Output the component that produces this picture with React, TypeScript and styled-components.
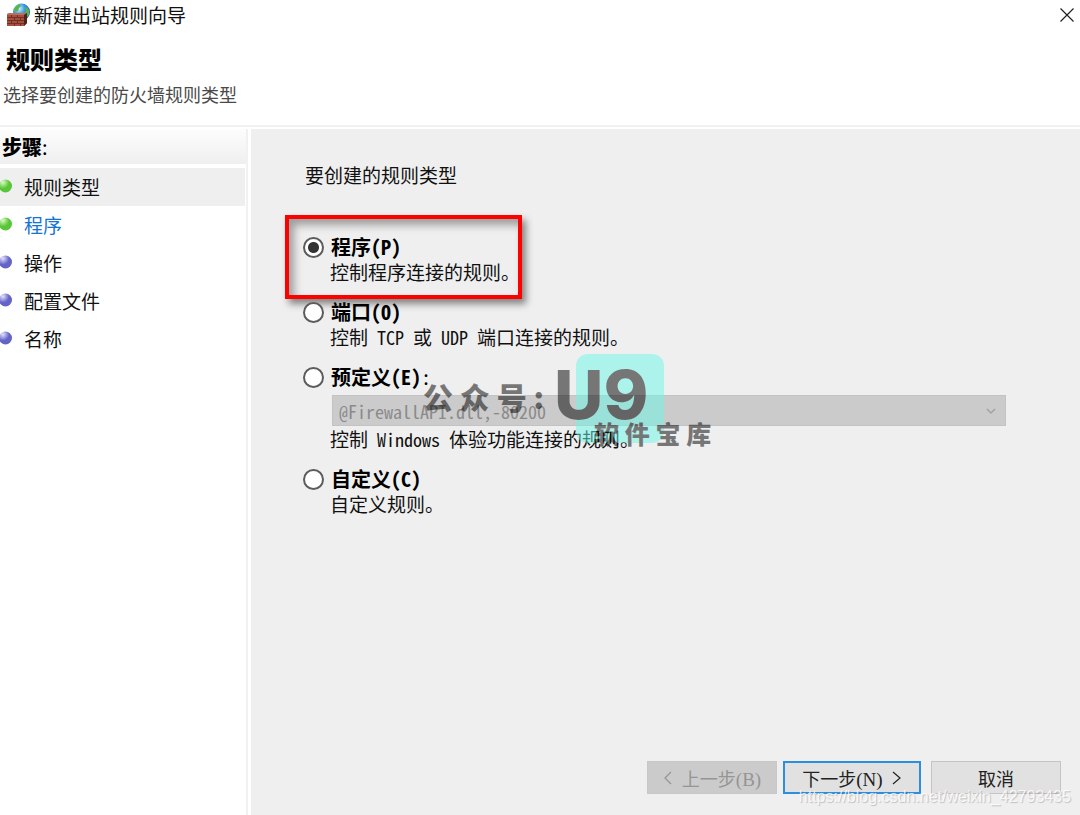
import React, { useState } from "react";
import styled, { createGlobalStyle, css } from "styled-components";

const sans = `"Noto Sans CJK SC", sans-serif`;

const GlobalStyle = createGlobalStyle`
  *, *::before, *::after { box-sizing: border-box; }
  body { margin: 0; background: #fff; font-family: ${sans}; color: #111; }
`;

const halfWidth = css`
  font-family: ${sans};
  font-feature-settings: "hwid" 1;
`;

const Wizard = styled.div`
  position: relative;
  display: flex;
  flex-direction: column;
  min-height: 100vh;
  overflow: hidden;
`;

const TitleBar = styled.header`
  display: flex;
  align-items: center;
  gap: 3px;
  height: 30px;
  padding: 0 5px 0 6px;
`;

const TitleText = styled.span`
  flex: 1;
  font-size: 19px;
  line-height: 28px;
`;

const CloseButton = styled.button`
  display: flex;
  padding: 0;
  border: 0;
  background: none;
`;

const Intro = styled.div`
  padding: 13px 0 17px;
  border-bottom: 2px solid #f1f1f1;
`;

const Heading = styled.h1`
  margin: 0;
  padding-left: 6px;
  font-size: 24px;
  line-height: 32px;
  font-weight: 900;
  color: #000;
`;

const Subtitle = styled.p`
  margin: 0;
  padding: 6px 0 0 3px;
  font-size: 18px;
  line-height: 27px;
  color: #4a4a4a;
`;

const Body = styled.div`
  display: flex;
  flex: 1;
  gap: 3px;
  padding-top: 2px;
`;

const Sidebar = styled.nav`
  flex: 0 0 248px;
  border-right: 2px solid #f1f1f1;
`;

const StepsTitle = styled.h2`
  margin: 0 0 4px;
  padding: 0 0 0 2px;
  font-size: 20px;
  line-height: 35px;
  font-weight: 900;
  color: #000;
  background: linear-gradient(#fdfdfd, #efefef);
`;

const Colon = styled.span`
  font-weight: 400;
`;

const StepList = styled.ol`
  margin: 0;
  padding: 0;
  list-style: none;
`;

const Step = styled.li<{ $active?: boolean }>`
  display: flex;
  align-items: center;
  gap: 11px;
  height: 38px;
  margin-right: 1px;
  font-size: 19px;
  line-height: 28px;
  background: ${(p) => (p.$active ? "#efefef" : "transparent")};
`;

const StepLink = styled.a`
  color: #1673cf;
  text-decoration: none;
`;

const Content = styled.main`
  flex: 1;
  display: flex;
  flex-direction: column;
  min-width: 0;
  background: #efefef;
`;

const RuleForm = styled.fieldset`
  flex: 1;
  min-width: 0;
  margin: 0;
  padding: 0 74px 0 52px;
  border: 0;
`;

const Legend = styled.legend`
  padding: 32px 0 46px 2px;
  font-size: 19px;
  line-height: 28px;
`;

const Option = styled.div<{ $marked?: boolean }>`
  position: relative;
  margin-bottom: 16px;
  ${(p) =>
    p.$marked &&
    css`
      &::after {
        content: "";
        position: absolute;
        left: -18px;
        top: -20px;
        width: 237px;
        height: 84px;
        border: 4px solid #fe0000;
        box-shadow: 4px 5px 7px rgba(0, 0, 0, 0.45), inset 5px 6px 8px rgba(0, 0, 0, 0.35);
        pointer-events: none;
      }
    `}
`;

const OptionLabel = styled.label`
  ${halfWidth}
  display: flex;
  align-items: center;
  gap: 7px;
  height: 24px;
  font-size: 20px;
  line-height: 24px;
  font-weight: 700;
  color: #000;
`;

const Radio = styled.input`
  appearance: none;
  flex: none;
  width: 21px;
  height: 21px;
  margin: 0;
  border: 2px solid #5c5c5c;
  border-radius: 50%;
  background: #fff;
  &:checked {
    background: radial-gradient(circle, #333 0 5px, #fff 6px);
  }
`;

const Latin = styled.span`
  font-size: 18px;
  line-height: 1;
`;

const Description = styled.p`
  ${halfWidth}
  margin: 0;
  padding-left: 27px;
  font-size: 19px;
  line-height: 25px;
`;

const SelectWrap = styled.div`
  position: relative;
  display: flex;
  margin: 6px 0 0 29px;
`;

const Select = styled.select`
  ${halfWidth}
  appearance: none;
  flex: 1;
  height: 31px;
  padding: 0 30px 0 6px;
  border: 1px solid #c3c3c3;
  border-radius: 0;
  background: #cbcbcb;
  color: #8a8a8a;
  opacity: 1;
  font-size: 18px;
`;

const Chevron = styled.svg`
  position: absolute;
  right: 9px;
  top: 12px;
`;

const Actions = styled.footer`
  display: flex;
  justify-content: flex-end;
  padding: 0 19px 21px;
`;

const ActionButton = styled.button<{ $primary?: boolean }>`
  display: flex;
  align-items: center;
  justify-content: center;
  gap: 9px;
  width: ${(p) => (p.$primary ? 138 : 130)}px;
  height: 33px;
  margin-left: ${(p) => (p.$primary ? 6 : 10)}px;
  padding: 0;
  border: ${(p) => (p.$primary ? "2px solid #2b8ede" : "1px solid #c4c4c4")};
  background: #e1e1e1;
  color: #222;
  font-family: ${sans};
  font-size: 18px;
  line-height: 26px;
  &:disabled {
    border-color: #c8c8c8;
    background: #cbcbcb;
    color: #959595;
  }
`;

const ButtonKey = styled.span`
  font-family: "Liberation Serif", serif;
  font-size: 19px;
  line-height: 1;
`;

const Watermark = styled.div`
  position: absolute;
  left: 423px;
  top: 354px;
  width: 292px;
  height: 98px;
  color: #000;
  opacity: 0.5;
  font-weight: 900;
  white-space: nowrap;
  pointer-events: none;
`;

const Tile = styled.div`
  position: absolute;
  left: 153px;
  top: 0;
  width: 88px;
  height: 89px;
  border-radius: 12px;
  background: #6bf7e9;
`;

const MarkText = styled.span<{ $x: number; $y: number; $size: number }>`
  position: absolute;
  left: ${(p) => p.$x}px;
  top: ${(p) => p.$y}px;
  font-size: ${(p) => p.$size}px;
  line-height: 1;
`;

const MarkLogo = styled(MarkText)`
  font-family: Inter, sans-serif;
  font-weight: 800;
`;

const SourceNote = styled.div`
  position: absolute;
  right: 9px;
  bottom: 8px;
  font-family: "Liberation Sans", sans-serif;
  font-size: 16px;
  line-height: 20px;
  color: rgba(255, 255, 255, 0.8);
  text-shadow: 1px 1px 1px rgba(0, 0, 0, 0.2);
  pointer-events: none;
`;

const FirewallIcon = () => (
  <svg width="25" height="25" viewBox="0 0 25 25" aria-hidden="true">
    <defs>
      <radialGradient id="globe" cx="0.35" cy="0.3" r="0.75">
        <stop offset="0" stopColor="#d4f0ff" />
        <stop offset="0.45" stopColor="#3f9be6" />
        <stop offset="1" stopColor="#1542a4" />
      </radialGradient>
    </defs>
    <circle cx="15.500" cy="9" r="8.500" fill="url(#globe)" />
    <path d="M8 6q2-4 6-5l1 2-2 2-1 3-4 1zM19 5l2-1q3 3 2 8l-3 3-2-4 2-3z" fill="#55b848" />
    <path d="M1 11l3-1h17v10l-3 3H1z" fill="#733024" />
    <path d="M1 11l3-1h17l-3 2H1z" fill="#b9705a" />
    <path d="M18 12l3-2v10l-3 3z" fill="#52231d" />
    <g fill="#a8503e">
      <path d="M1 12h4v2H1zM6 12h5v2H6zM12 12h6v2h-6z" />
      <path d="M1 15h7v2H1zM9 15h5v2H9zM15 15h3v2h-3z" />
      <path d="M1 18h4v2H1zM6 18h5v2H6zM12 18h6v2h-6z" />
      <path d="M1 21h7v2H1zM9 21h5v2H9zM15 21h3v2h-3z" />
    </g>
  </svg>
);

const Ball = ({ done }: { done?: boolean }) => {
  const id = done ? "ball-done" : "ball-todo";
  return (
    <svg width="13" height="16" viewBox="0 0 13 16" aria-hidden="true">
      <defs>
        <radialGradient id={id} cx="0.3" cy="0.22" r="0.6">
          <stop offset="0" stopColor={done ? "#dcf8cc" : "#e2e2fa"} />
          <stop offset="0.5" stopColor={done ? "#8ada68" : "#9494dc"} />
          <stop offset="0.8" stopColor={done ? "#58c638" : "#6464c8"} />
          <stop offset="1" stopColor={done ? "#58c638" : "#6464c8"} />
        </radialGradient>
      </defs>
      <circle cx="5.500" cy="7" r="6.500" fill={`url(#${id})`} />
    </svg>
  );
};

const Arrow = ({ left }: { left?: boolean }) => (
  <svg width="10" height="14" viewBox="0 0 10 14" fill="none" stroke="currentColor" aria-hidden="true">
    <path d={left ? "M8 1L2 7l6 6" : "M1 1l7 6-7 6"} strokeWidth="1.200" />
  </svg>
);

const steps = [
  { name: "规则类型", done: true, active: true },
  { name: "程序", done: true, link: true },
  { name: "操作" },
  { name: "配置文件" },
  { name: "名称" },
];

export default function App() {
  const [rule, setRule] = useState("program");
  const radio = (value: string) => (
    <Radio type="radio" name="rule" id={value} checked={rule === value} onChange={() => setRule(value)} />
  );

  return (
    <Wizard>
      <GlobalStyle />
      <TitleBar>
        <FirewallIcon />
        <TitleText>新建出站规则向导</TitleText>
        <CloseButton type="button" aria-label="关闭">
          <svg width="16" height="16" viewBox="0 0 16 16" stroke="#222" strokeWidth="1.200" aria-hidden="true">
            <path d="M1.500 1.500l13 13M14.500 1.500l-13 13" />
          </svg>
        </CloseButton>
      </TitleBar>
      <Intro>
        <Heading>规则类型</Heading>
        <Subtitle>选择要创建的防火墙规则类型</Subtitle>
      </Intro>
      <Body>
        <Sidebar>
          <StepsTitle>
            步骤<Colon>:</Colon>
          </StepsTitle>
          <StepList>
            {steps.map((s) => (
              <Step key={s.name} $active={s.active}>
                <Ball done={s.done} />
                {s.link ? <StepLink href="#program">{s.name}</StepLink> : s.name}
              </Step>
            ))}
          </StepList>
        </Sidebar>
        <Content>
          <RuleForm>
            <Legend>要创建的规则类型</Legend>
            <Option $marked>
              <OptionLabel htmlFor="program">
                {radio("program")}
                <span>程序(P)</span>
              </OptionLabel>
              <Description>控制程序连接的规则。</Description>
            </Option>
            <Option>
              <OptionLabel htmlFor="port">
                {radio("port")}
                <span>端口(O)</span>
              </OptionLabel>
              <Description>
                控制<Latin> TCP </Latin>或<Latin> UDP </Latin>端口连接的规则。
              </Description>
            </Option>
            <Option>
              <OptionLabel htmlFor="predefined">
                {radio("predefined")}
                <span>预定义(E)<Colon>:</Colon></span>
              </OptionLabel>
              <SelectWrap>
                <Select disabled aria-label="预定义">
                  <option>@FirewallAPI.dll,-80200</option>
                </Select>
                <Chevron width="11" height="8" viewBox="0 0 11 8" fill="none" stroke="#a2a2a2" aria-hidden="true">
                  <path d="M1 2l4 4 4-4" strokeWidth="1.500" />
                </Chevron>
              </SelectWrap>
              <Description>
                控制<Latin> Windows </Latin>体验功能连接的规则。
              </Description>
            </Option>
            <Option>
              <OptionLabel htmlFor="custom">
                {radio("custom")}
                <span>自定义(C)</span>
              </OptionLabel>
              <Description>自定义规则。</Description>
            </Option>
          </RuleForm>
          <Actions>
            <ActionButton type="button" disabled>
              <Arrow left />
              <span>上一步<ButtonKey>(B)</ButtonKey></span>
            </ActionButton>
            <ActionButton type="button" $primary>
              <span>下一步<ButtonKey>(N)</ButtonKey></span>
              <Arrow />
            </ActionButton>
            <ActionButton type="button">取消</ActionButton>
          </Actions>
        </Content>
      </Body>
      <Watermark>
        <Tile />
        <MarkText $x={0} $y={27} $size={30}>公 众 号 :</MarkText>
        <MarkLogo $x={131} $y={6} $size={68}>U9</MarkLogo>
        <MarkText $x={171} $y={67} $size={25}>软 件 宝 库</MarkText>
      </Watermark>
      <SourceNote>https://blog.csdn.net/weixin_42793435</SourceNote>
    </Wizard>
  );
}
